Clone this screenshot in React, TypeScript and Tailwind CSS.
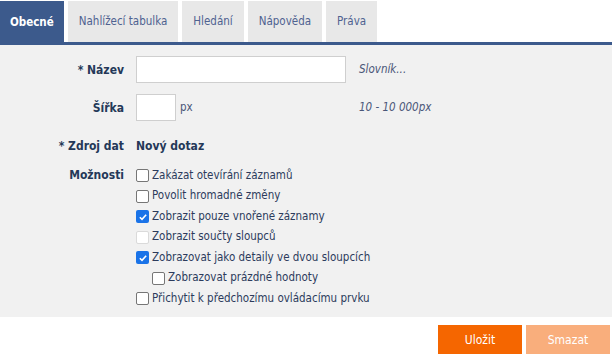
const tabs = ["Obecné", "Nahlížecí tabulka", "Hledání", "Nápověda", "Práva"];

const options = [
  { label: "Zakázat otevírání záznamů", checked: false },
  { label: "Povolit hromadné změny", checked: false },
  { label: "Zobrazit pouze vnořené záznamy", checked: true },
  { label: "Zobrazit součty sloupců", checked: false, disabled: true },
  { label: "Zobrazovat jako detaily ve dvou sloupcích", checked: true },
  { label: "Zobrazovat prázdné hodnoty", checked: false, nested: true },
  { label: "Přichytit k předchozímu ovládacímu prvku", checked: false },
];

const Check = ({ checked, disabled }: { checked: boolean; disabled?: boolean }) =>
  checked ? (
    <span className="w-[13px] h-[13px] rounded-[2px] bg-[#1a73e8] flex items-center justify-center shrink-0">
      <svg viewBox="0 0 12 12" className="w-[10px] h-[10px]">
        <path d="M2.2 6.3 L4.8 8.8 L9.8 3.2" fill="none" stroke="#fff" strokeWidth="1.9" />
      </svg>
    </span>
  ) : (
    <span
      className={`w-[13px] h-[13px] rounded-[2px] border bg-white shrink-0 ${
        disabled ? "border-[#dadada] bg-[#f7f7f7]" : "border-[#767676]"
      }`}
    />
  );

export default function App() {
  return (
    <div className="w-[612px] h-[354px] bg-white font-['DejaVu_Sans_Condensed','DejaVu_Sans',sans-serif] text-[11.5px]">
      <div className="flex gap-[4px] pt-[1px] h-[42px]">
        {tabs.map((t, i) => (
          <div
            key={t}
            className={
              i === 0
                ? "bg-[#3c5a8c] text-white font-bold px-[10px] flex items-center h-[44px]"
                : "bg-[#e8e8e8] text-[#4f6290] px-[11px] flex items-center"
            }
          >
            {t}
          </div>
        ))}
      </div>
      <div className="h-[3px] bg-[#3c5a8c]" />
      <div className="bg-[#f1f1f1] h-[272px] pt-[11px]">
        <div className="grid grid-cols-[124px_auto_1fr] gap-x-[12px] items-center">
          <div className="text-right font-bold text-[#243858] text-[12px]">* Název</div>
          <div className="h-[27px] w-[210px] bg-white border border-[#cfcfcf]" />
          <div className="italic text-[#4a5678] pl-[1px]">Slovník...</div>

          <div className="text-right font-bold text-[#243858] text-[12px] mt-[11px]">Šířka</div>
          <div className="flex items-center gap-[4px] mt-[11px]">
            <div className="h-[27px] w-[40px] bg-white border border-[#cfcfcf]" />
            <span className="text-[#4a5678]">px</span>
          </div>
          <div className="italic text-[#4a5678] mt-[11px] pl-[1px]">10 - 10 000px</div>

          <div className="text-right font-bold text-[#243858] text-[12px] mt-[16px]">* Zdroj dat</div>
          <div className="font-bold text-[#243858] text-[12px] mt-[16px] col-span-2">Nový dotaz</div>

          <div className="text-right font-bold text-[#243858] text-[12px] self-start mt-[14px] leading-[13px]">Možnosti</div>
          <div className="col-span-2 mt-[14px] flex flex-col gap-[7.5px]">
            {options.map((o) => (
              <label
                key={o.label}
                className={`flex items-center gap-[3px] h-[13px] text-[#2c3b5c] ${o.nested ? "pl-[16px]" : ""}`}
              >
                <Check checked={o.checked} disabled={o.disabled} />
                <span>{o.label}</span>
              </label>
            ))}
          </div>
        </div>
      </div>
      <div className="flex justify-end gap-[4px] pr-[2px] pt-[8px]">
        <button className="w-[84px] h-[29px] bg-[#f56600] text-white text-[12px]">Uložit</button>
        <button className="w-[84px] h-[29px] bg-[#f9ae7c] text-white text-[12px]">Smazat</button>
      </div>
    </div>
  );
}
